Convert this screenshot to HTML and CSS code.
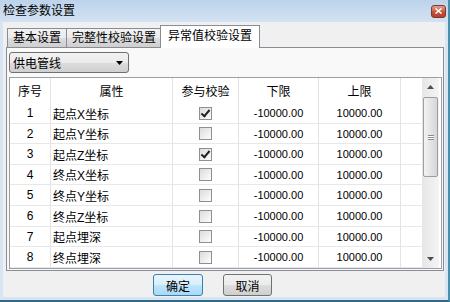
FILE: index.html
```html
<!DOCTYPE html>
<html lang="zh-CN">
<head>
  <meta charset="UTF-8">
  <title>检查参数设置</title>
  <link rel="stylesheet" href="styles.css">
</head>
<body>
  <div class="window">
    <div class="titlebar">
      <span class="title">检查参数设置</span>
      <span class="close">
        <svg width="7" height="6" viewBox="0 0 7 6"><path d="M0.5 0.5 L6.5 5.5 M6.5 0.5 L0.5 5.5" stroke="#fff" stroke-width="1.6"/></svg>
      </span>
    </div>

    <div class="client">
      <div class="tabs">
        <div class="tab">基本设置</div>
        <div class="tab">完整性校验设置</div>
        <div class="tab active">异常值校验设置</div>
      </div>

      <div class="page">
        <div class="combo">
          <span>供电管线</span>
          <svg width="7" height="4" viewBox="0 0 7 4"><path d="M0 0 H7 L3.5 4 Z" fill="#000"/></svg>
        </div>

        <div class="grid">
          <div class="table">
            <div class="row head">
              <div class="c c1">序号</div>
              <div class="c c2">属性</div>
              <div class="c c3">参与校验</div>
              <div class="c c4">下限</div>
              <div class="c c5">上限</div>
              <div class="c c6"></div>
            </div>
            <div class="row">
              <div class="c c1">1</div>
              <div class="c c2">起点X坐标</div>
              <div class="c c3"><span class="check on"></span></div>
              <div class="c c4">-10000.00</div>
              <div class="c c5">10000.00</div>
              <div class="c c6"></div>
            </div>
            <div class="row">
              <div class="c c1">2</div>
              <div class="c c2">起点Y坐标</div>
              <div class="c c3"><span class="check"></span></div>
              <div class="c c4">-10000.00</div>
              <div class="c c5">10000.00</div>
              <div class="c c6"></div>
            </div>
            <div class="row">
              <div class="c c1">3</div>
              <div class="c c2">起点Z坐标</div>
              <div class="c c3"><span class="check on"></span></div>
              <div class="c c4">-10000.00</div>
              <div class="c c5">10000.00</div>
              <div class="c c6"></div>
            </div>
            <div class="row">
              <div class="c c1">4</div>
              <div class="c c2">终点X坐标</div>
              <div class="c c3"><span class="check"></span></div>
              <div class="c c4">-10000.00</div>
              <div class="c c5">10000.00</div>
              <div class="c c6"></div>
            </div>
            <div class="row">
              <div class="c c1">5</div>
              <div class="c c2">终点Y坐标</div>
              <div class="c c3"><span class="check"></span></div>
              <div class="c c4">-10000.00</div>
              <div class="c c5">10000.00</div>
              <div class="c c6"></div>
            </div>
            <div class="row">
              <div class="c c1">6</div>
              <div class="c c2">终点Z坐标</div>
              <div class="c c3"><span class="check"></span></div>
              <div class="c c4">-10000.00</div>
              <div class="c c5">10000.00</div>
              <div class="c c6"></div>
            </div>
            <div class="row">
              <div class="c c1">7</div>
              <div class="c c2">起点埋深</div>
              <div class="c c3"><span class="check"></span></div>
              <div class="c c4">-10000.00</div>
              <div class="c c5">10000.00</div>
              <div class="c c6"></div>
            </div>
            <div class="row">
              <div class="c c1">8</div>
              <div class="c c2">终点埋深</div>
              <div class="c c3"><span class="check"></span></div>
              <div class="c c4">-10000.00</div>
              <div class="c c5">10000.00</div>
              <div class="c c6"></div>
            </div>
          </div>

          <div class="vscroll">
            <div class="arrow">
              <svg width="7" height="4" viewBox="0 0 7 4"><path d="M3.5 0 L7 4 H0 Z" fill="#4d4d4d"/></svg>
            </div>
            <div class="track">
              <div class="thumb"><span class="grip"></span></div>
            </div>
            <div class="arrow">
              <svg width="7" height="4" viewBox="0 0 7 4"><path d="M0 0 H7 L3.5 4 Z" fill="#4d4d4d"/></svg>
            </div>
          </div>
        </div>
      </div>

      <div class="buttons">
        <button class="btn default">确定</button>
        <button class="btn">取消</button>
      </div>
    </div>
  </div>
</body>
</html>
```

FILE: styles.css
```css
body {
  margin: 0;
  overflow: hidden;
  font-family: "Liberation Sans", "Noto Sans CJK SC", sans-serif;
  font-size: 12px;
  color: #000;
}

.window {
  width: 450px;
  height: 302px;
  display: flex;
  flex-direction: column;
  box-sizing: border-box;
  background: #d7e4f2;
  border-right: 2px solid #4a8fab;
  border-bottom: 2px solid #2f6b88;
}

.titlebar {
  height: 22px;
  flex: none;
  display: flex;
  align-items: center;
  justify-content: space-between;
  padding: 0 2px 0 3px;
  background: linear-gradient(#bdd3eb, #d3e2f2);
}

.title {
  line-height: 14px;
}

.close {
  width: 13px;
  height: 11px;
  display: flex;
  align-items: center;
  justify-content: center;
  border: 1px solid #7a3a2e;
  border-radius: 3px;
  background: linear-gradient(#e3a08f, #c7513c 55%, #b8402c);
}

.client {
  flex: 1;
  display: flex;
  flex-direction: column;
  margin: 0 3px 3px 3px;
  padding: 3px 1px 0 3px;
  background: #f0f0f0;
}

/* tab strip */
.tabs {
  height: 22px;
  display: flex;
  align-items: flex-end;
  padding-left: 1px;
}

.tab {
  height: 19px;
  line-height: 19px;
  padding: 0 5px;
  box-sizing: border-box;
  border: 1px solid #898c95;
  border-bottom: 0;
  margin-right: -1px;
  background: linear-gradient(#f2f2f2, #ebebeb 50%, #dddddd 51%, #cfcfcf);
}

.tab.active {
  height: 23px;
  line-height: 21px;
  padding: 0 7px;
  margin: 0 0 -1px -1px;
  background: #fff;
  position: relative;
}

.page {
  height: 224px;
  box-sizing: border-box;
  border: 1px solid #898c95;
  padding: 4px 1px 1px 2px;
  background: #f9f9f9;
  display: flex;
  flex-direction: column;
  gap: 4px;
}

/* combo box */
.combo {
  width: 120px;
  height: 21px;
  box-sizing: border-box;
  border: 1px solid #707070;
  border-radius: 3px;
  padding: 0 5px 0 3px;
  display: flex;
  align-items: center;
  justify-content: space-between;
  background: linear-gradient(#f2f2f2, #ebebeb 50%, #dddddd 51%, #cfcfcf);
}

/* data grid */
.grid {
  height: 192px;
  box-sizing: border-box;
  border: 1px solid #9a9ea6;
  background: #fff;
  display: flex;
  padding-right: 2px;
}

.table {
  flex: 1;
}

.row {
  display: flex;
  height: 21px;
  border-bottom: 1px solid #e8e8e8;
  box-sizing: border-box;
}

.row:nth-child(3), .row:nth-child(5), .row:nth-child(8) {
  height: 20px;
}

.row.head {
  height: 25px;
  border-bottom: 0;
}

.c {
  box-sizing: border-box;
  border-right: 1px solid #e3e3e3;
  display: flex;
  align-items: center;
  justify-content: center;
  white-space: nowrap;
}

.c1 { width: 41px; }
.c2 { width: 122px; justify-content: flex-start; padding-left: 2px; }
.c3 { width: 66px; }
.c4 { width: 80px; font-size: 11px; }
.c5 { width: 82px; font-size: 11px; }
.c6 { flex: 1; border-right: 0; }

.head .c2 { justify-content: center; padding-left: 0; }
.head .c4, .head .c5 { font-size: 12px; }

.check {
  width: 13px;
  height: 13px;
  box-sizing: border-box;
  border: 1px solid #8e8f8f;
  background: linear-gradient(135deg, #dcdcdc, #fdfdfd);
  position: relative;
}

.check.on::after {
  content: "";
  position: absolute;
  left: 3px;
  top: 0;
  width: 3px;
  height: 7px;
  border: solid #222;
  border-width: 0 2px 2px 0;
  transform: rotate(40deg);
}

/* scroll bar */
.vscroll {
  width: 17px;
  display: flex;
  flex-direction: column;
  background: linear-gradient(90deg, #e6e6e6, #f4f4f4);
}

.arrow {
  height: 18px;
  display: flex;
  align-items: center;
  justify-content: center;
}

.track {
  flex: 1;
  padding: 1px 1px 0 1px;
}

.thumb {
  height: 80px;
  box-sizing: border-box;
  border: 1px solid #9b9ea4;
  border-radius: 2px;
  background: linear-gradient(90deg, #f3f3f3, #e4e4e4 50%, #d6d6d6);
  display: flex;
  align-items: center;
  justify-content: center;
}

.grip {
  width: 6px;
  height: 5px;
  border-top: 1px solid #8a8a8a;
  border-bottom: 1px solid #8a8a8a;
  background: linear-gradient(#fff 40%, #8a8a8a 40%, #8a8a8a 60%, #fff 60%);
  box-sizing: border-box;
}

/* bottom buttons */
.buttons {
  display: flex;
  gap: 20px;
  padding: 3px 0 0 147px;
}

.btn {
  width: 49px;
  height: 22px;
  padding: 0;
  font-family: "Liberation Sans", "Noto Sans CJK SC", sans-serif;
  font-size: 12px;
  border: 1px solid #707070;
  border-radius: 3px;
  background: linear-gradient(#f2f2f2, #ebebeb 50%, #dddddd 51%, #cfcfcf);
}

.btn.default {
  width: 50px;
  border-color: #3c7fb1;
  background: linear-gradient(#e8f5fc, #d9eefb 50%, #bee6fd 51%, #a7d9f5);
}
```
